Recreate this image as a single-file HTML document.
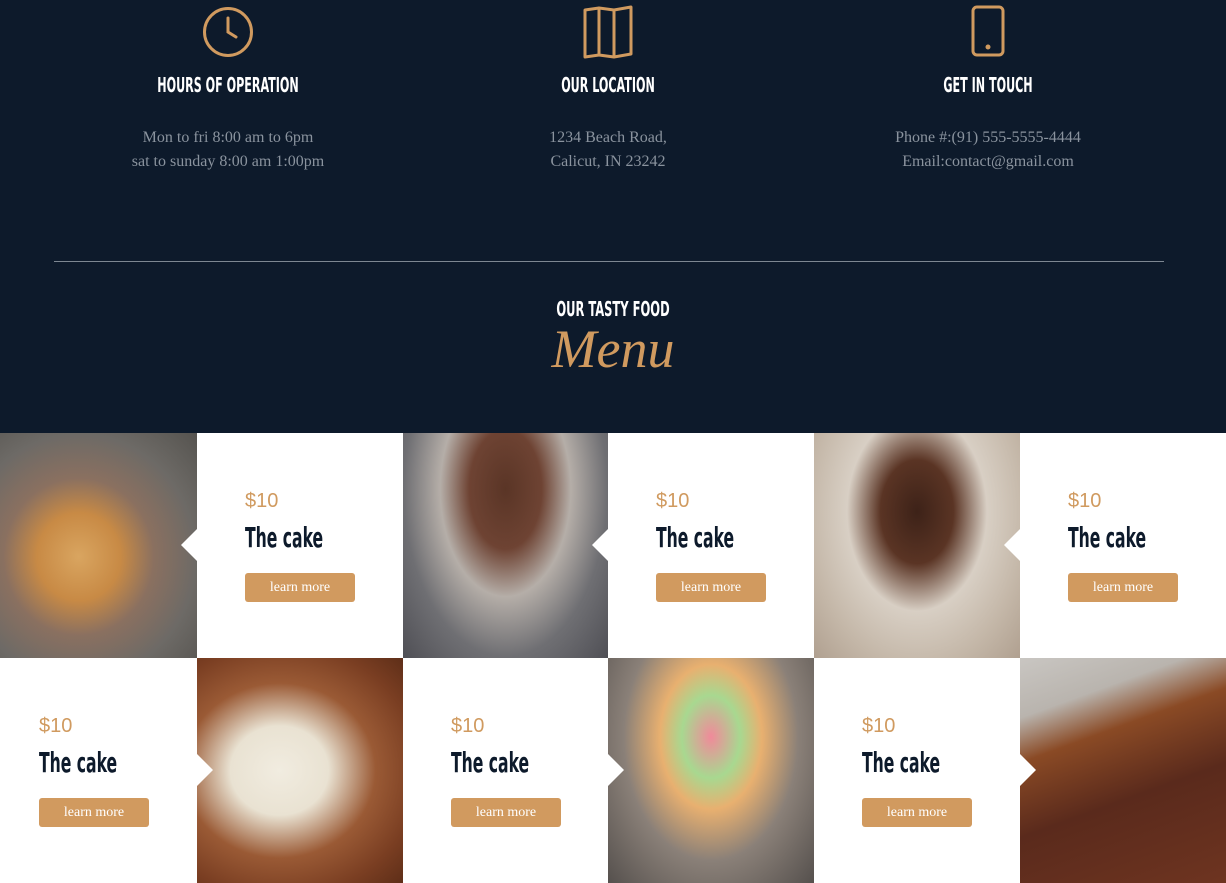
<!DOCTYPE html>
<html><head><style>
*{margin:0;padding:0;box-sizing:border-box}
body{width:1226px;height:879px;overflow:hidden;background:#fff;font-family:"Liberation Serif",serif;position:relative}
.top{position:absolute;left:0;top:0;width:1226px;height:433px;background:#0d1a2b}
.col{position:absolute;top:0;width:380px;text-align:center}
.col svg{position:absolute;left:162px;top:4px}
.h{font-family:"DejaVu Sans Condensed","Liberation Sans",sans-serif;font-weight:bold;color:#fff;font-size:20px;transform:scaleX(.62);white-space:nowrap;position:absolute;left:0;width:380px;top:73px}
.p{position:absolute;left:0;width:380px;top:126px;color:#8a939e;font-size:16px;line-height:24px}
.hr{position:absolute;left:54px;top:261px;width:1110px;height:1px;background:#7d8792}
.tf{position:absolute;left:0;width:1226px;top:297px;text-align:center;color:#fff;font-family:"DejaVu Sans Condensed","Liberation Sans",sans-serif;font-weight:bold;font-size:20px;transform:scaleX(.64)}
.menu{position:absolute;left:0;width:1226px;top:318px;text-align:center;color:#d09a5f;font-family:"Liberation Serif",serif;font-style:italic;font-size:54px}
.cell{position:absolute;height:225px}
.t{background:#fff}
.t .pr{position:absolute;left:48px;top:57px;color:#d09a5f;font-family:"Liberation Sans",sans-serif;font-size:20px}
.t .n{position:absolute;left:48px;top:88px;color:#0d1a2b;font-family:"DejaVu Sans Condensed","Liberation Sans",sans-serif;font-weight:bold;font-size:28px;transform:scaleX(.62);transform-origin:left;white-space:nowrap}
.t .b{position:absolute;left:48px;top:140px;width:110px;height:29px;background:#d19a5f;border-radius:3px;color:#fff;font-size:14px;text-align:center;line-height:29px}
.ar{position:absolute;left:-16px;top:96px;width:0;height:0;border-top:16px solid transparent;border-bottom:16px solid transparent;border-right:16px solid #fff}
.arr{position:absolute;right:-16px;top:96px;width:0;height:0;border-top:16px solid transparent;border-bottom:16px solid transparent;border-left:16px solid #fff;z-index:2}
.r2 .pr,.r2 .n,.r2 .b{left:39px}
.r2{z-index:2}
</style></head><body>
<div class="top">
 <div class="col" style="left:38px">
  <svg width="56" height="56" viewBox="0 0 56 56"><circle cx="28" cy="28" r="23.5" fill="none" stroke="#d09a5f" stroke-width="3"/><path d="M28 14V28L36 33" fill="none" stroke="#d09a5f" stroke-width="3" stroke-linecap="round"/></svg>
  <div class="h">HOURS OF OPERATION</div>
  <div class="p">Mon to fri 8:00 am to 6pm<br>sat to sunday 8:00 am 1:00pm</div>
 </div>
 <div class="col" style="left:418px">
  <svg width="56" height="56" viewBox="0 0 56 56"><path d="M5 6L19 4L34 6L51 3V50L34 53L19 51L5 53Z M19 4V51 M34 6V53" fill="none" stroke="#d09a5f" stroke-width="3" stroke-linejoin="round"/></svg>
  <div class="h">OUR LOCATION</div>
  <div class="p">1234 Beach Road,<br>Calicut, IN 23242</div>
 </div>
 <div class="col" style="left:798px">
  <svg width="56" height="56" viewBox="0 0 56 56"><rect x="13" y="3" width="30" height="48" rx="4" fill="none" stroke="#d09a5f" stroke-width="3"/><circle cx="28" cy="43" r="2.5" fill="#d09a5f"/></svg>
  <div class="h">GET IN TOUCH</div>
  <div class="p">Phone #:(91) 555-5555-4444<br>Email:contact@gmail.com</div>
 </div>
 <div class="hr"></div>
 <div class="tf">OUR TASTY FOOD</div>
 <div class="menu">Menu</div>
</div>

<div class="cell" style="left:0;top:433px;width:197px;background:radial-gradient(ellipse at 40% 55%,#d9a560 0,#c88a45 25%,#8a7060 45%,#6d6a66 70%,#55534f 100%)"></div>
<div class="cell t" style="left:197px;top:433px;width:206px"><div class="ar"></div><div class="pr">$10</div><div class="n">The cake</div><div class="b">learn more</div></div>
<div class="cell" style="left:403px;top:433px;width:205px;background:radial-gradient(ellipse at 50% 25%,#5a3526 0,#6e4333 25%,#b5aea8 45%,#6f6f73 70%,#4f4f55 100%)"></div>
<div class="cell t" style="left:608px;top:433px;width:206px"><div class="ar"></div><div class="pr">$10</div><div class="n">The cake</div><div class="b">learn more</div></div>
<div class="cell" style="left:814px;top:433px;width:206px;background:radial-gradient(ellipse at 50% 35%,#3d2218 0,#5a3424 25%,#d8cfc4 48%,#c4b7a8 75%,#b0a090 100%)"></div>
<div class="cell t" style="left:1020px;top:433px;width:206px"><div class="ar"></div><div class="pr">$10</div><div class="n">The cake</div><div class="b">learn more</div></div>

<div class="cell" style="left:197px;top:658px;width:206px;background:radial-gradient(ellipse at 40% 50%,#f1ece0 0,#e9e2d2 28%,#9a5a35 55%,#7a3e22 80%,#5e2e18 100%)"></div>
<div class="cell" style="left:608px;top:658px;width:206px;background:radial-gradient(ellipse at 50% 35%,#f08a9a 0,#a8d890 20%,#e8b070 35%,#8a8078 60%,#55504d 100%)"></div>
<div class="cell" style="left:1020px;top:658px;width:206px;background:linear-gradient(160deg,#c9c6c2 0,#b9b4ae 20%,#8a4a25 35%,#5a2a1c 60%,#6e3420 100%)"></div>
<div class="cell t r2" style="left:0;top:658px;width:197px"><div class="arr"></div><div class="pr">$10</div><div class="n">The cake</div><div class="b">learn more</div></div>
<div class="cell t r2" style="left:403px;top:658px;width:205px"><div class="arr"></div><div class="pr" style="left:48px">$10</div><div class="n" style="left:48px">The cake</div><div class="b" style="left:48px">learn more</div></div>
<div class="cell t r2" style="left:814px;top:658px;width:206px"><div class="arr"></div><div class="pr" style="left:48px">$10</div><div class="n" style="left:48px">The cake</div><div class="b" style="left:48px">learn more</div></div>
</body></html>
